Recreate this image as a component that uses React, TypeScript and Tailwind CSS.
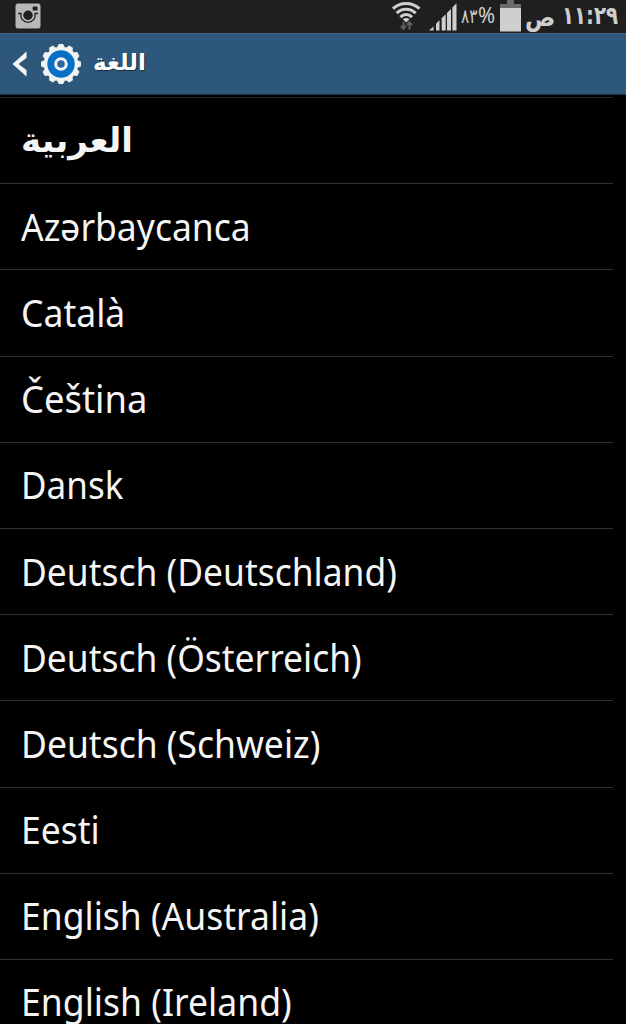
import React from 'react';

interface Language {
    name: string;
    // Horizontal condensing of the label
    scale: string;
}

const languages: Language[] = [
    { name: 'Azərbaycanca', scale: 'scale-x-[0.934]' },
    { name: 'Català', scale: 'scale-x-[0.935]' },
    { name: 'Čeština', scale: 'scale-x-[0.958]' },
    { name: 'Dansk', scale: 'scale-x-[0.922]' },
    { name: 'Deutsch (Deutschland)', scale: 'scale-x-[0.932]' },
    { name: 'Deutsch (Österreich)', scale: 'scale-x-[0.932]' },
    { name: 'Deutsch (Schweiz)', scale: 'scale-x-[0.934]' },
    { name: 'Eesti', scale: 'scale-x-[0.934]' },
    { name: 'English (Australia)', scale: 'scale-x-[0.934]' },
    { name: 'English (Ireland)', scale: 'scale-x-[0.936]' },
];

const teeth = [0, 30, 60, 90, 120, 150, 180, 210, 240, 270, 300, 330];

const CameraIcon = () => (
    <svg width="26" height="26" viewBox="0 0 26 26" className="shrink-0">
        <rect x="0.5" y="0.5" width="25" height="25" rx="2.5" fill="#b8b8b8" />
        <path d="M3 10.5H6A7.2 7.2 0 1 0 20 10.5H23" fill="none" stroke="#202020" strokeWidth="1.3" />
        <circle cx="13" cy="12.3" r="4.7" fill="#202020" />
        <rect x="17.7" y="3.5" width="4.8" height="4" rx="0.5" fill="#202020" />
    </svg>
);

const WifiIcon = () => (
    <svg width="30" height="30" viewBox="0 0 30 30" className="shrink-0">
        <g fill="none" stroke="#cfcfcf" strokeWidth="3.1">
            <path d="M1 7.7C8 0.7 20 0.7 27.5 7.7" />
            <path d="M4.7 12.1C10 6.9 18 6.9 23.7 12.1" />
            <path d="M8.4 16.2C12 12.6 16.4 12.6 20 16.2" />
        </g>
        <path d="M10.8 18.3Q14.2 15.8 17.6 18.3L14.2 21.5Z" fill="#cfcfcf" />
        <path d="M11.5 21V27.5M9 25L11.5 27.8L14 25M17.5 28.5V21.5M15 24L17.5 21.2L20 24" fill="none" stroke="#606060" strokeWidth="2" />
    </svg>
);

const SignalIcon = () => (
    <svg width="28" height="28" viewBox="0 0 28 28" className="shrink-0" fill="#cfcfcf">
        <path d="M0 27.5L4.5 23.5V27.5Z" />
        <path d="M7 20.8L10.5 17.3V27.5H7Z" />
        <path d="M12.7 15.2L16.7 11.2V27.5H12.7Z" />
        <path d="M18 10L22 6V27.5H18Z" />
        <path d="M23.4 4.4L27.5 0.3V27.5H23.4Z" />
    </svg>
);

const BatteryIcon = () => (
    <svg width="21" height="32" viewBox="0 0 21 32" className="shrink-0">
        <path d="M7 0H14V4H21V9H0V4H7Z" fill="#6b6b6b" />
        <rect y="8" width="21" height="23.5" fill="#cfcfcf" />
    </svg>
);

const GearIcon = () => (
    <svg width="42" height="42" viewBox="-21 -21 42 42" className="shrink-0">
        <g fill="#f2f2f2">
            {teeth.map((angle) => (
                <path key={angle} d="M-4 -16L-2.2 -20H2.2L4 -16Z" transform={`rotate(${angle})`} />
            ))}
            <circle r="17.2" />
        </g>
        <circle r="13.7" fill="#0870c4" />
        <circle r="5.3" fill="#2e6a9e" stroke="#f2f2f2" strokeWidth="3" />
    </svg>
);

const StatusBar = () => (
    <div className="flex h-[33px] items-start bg-[#1f1f1f] text-[#cfcfcf]">
        <div className="shrink-0 pt-[3px] pl-[15px]">
            <CameraIcon />
        </div>
        <div className="ml-[351px] shrink-0 pt-px">
            <WifiIcon />
        </div>
        <div className="ml-[7px] shrink-0 pt-[3px]">
            <SignalIcon />
        </div>
        <div className="ml-[4px] flex w-[35px] shrink-0 items-baseline pt-[4px] leading-[22px]">
            <span className="w-[17px] shrink-0 font-['DejaVu_Sans'] text-[20px]">
                <span className="inline-block origin-left scale-x-[0.77]">٨٣</span>
            </span>
            <span className="inline-block origin-left scale-x-[0.98] font-['Noto_Sans'] text-[21px]">%</span>
        </div>
        <div className="ml-[4px] shrink-0">
            <BatteryIcon />
        </div>
        <div className="ml-[4px] flex w-[98px] shrink-0 items-start pt-[2px] font-['DejaVu_Sans'] text-[25px] leading-[28px] font-bold">
            <span className="w-[37px] shrink-0 pt-[2px]">
                <span className="inline-block origin-left scale-x-[0.9]">ص</span>
            </span>
            <span className="w-[58px] shrink-0">
                <span className="inline-block origin-left scale-x-[0.79]">١١:٢٩</span>
            </span>
        </div>
    </div>
);

const TitleBar = () => (
    <header className="flex h-[62px] items-center border-t border-b border-t-[#3d6684] border-b-[#1b3347] bg-[#2e587b] pl-[12px]">
        <svg width="16" height="26" viewBox="0 0 16 26" className="shrink-0">
            <path d="M14.5 0.5V7L6.5 13L14.5 19V25.5L0.5 13Z" fill="#f5f5f5" />
        </svg>
        <div className="ml-[12px]">
            <GearIcon />
        </div>
        <h1
            dir="rtl"
            className="ml-[11px] pb-[5px] font-['DejaVu_Sans'] text-[23px] leading-[30px] font-bold text-white [text-shadow:1px_1px_1px_#0007]"
        >
            اللغة
        </h1>
    </header>
);

export default function App() {
    return (
        <div className="h-[1024px] w-[626px] overflow-hidden bg-black text-[#f5f5f5]">
            <StatusBar />
            <TitleBar />

            {/* Language list */}
            <ul className="mt-[2px] w-[613px]">
                <li className="flex h-[86.2px] items-center border-t border-[#262626] pb-[2px] pl-[21px]">
                    <span dir="rtl" className="font-['DejaVu_Sans'] text-[34px] leading-[48px] font-bold whitespace-nowrap">
                        العربية
                    </span>
                </li>
                {languages.map(({ name, scale }) => (
                    <li key={name} className="flex h-[86.2px] items-center border-t border-[#303030] pb-[2px] pl-[21px]">
                        <span className={`inline-block origin-left font-['Noto_Sans'] text-[38px] leading-[52px] whitespace-nowrap ${scale}`}>
                            {name}
                        </span>
                    </li>
                ))}
            </ul>
        </div>
    );
}
